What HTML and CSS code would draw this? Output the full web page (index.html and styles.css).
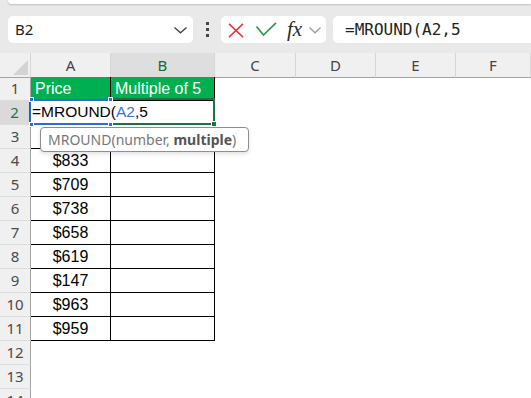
FILE: index.html
```html
<!DOCTYPE html>
<html>
<head>
<meta charset="utf-8">
<link rel="stylesheet" href="styles.css">
</head>
<body>
<div class="edge"></div>
<div class="fbar">
  <div class="namebox">
    <span class="nb-text">B2</span>
    <svg class="chev" width="13" height="7" viewBox="0 0 13 7"><polyline points="0.5,0.5 6.5,5.8 12.5,0.5" fill="none" stroke="#444" stroke-width="1.3"/></svg>
  </div>
  <div class="dots"><i></i><i></i><i></i></div>
  <div class="btns">
    <svg class="ic-x" width="16" height="15" viewBox="0 0 16 15"><path d="M1 0.8 L15 14.2 M15 0.8 L1 14.2" stroke="#e5393f" stroke-width="1.6" fill="none"/></svg>
    <svg class="ic-ok" width="21" height="15" viewBox="0 0 21 15"><polyline points="0.5,4.5 7.5,13 20,0.8" fill="none" stroke="#2e9a4a" stroke-width="1.7"/></svg>
    <span class="fx">fx</span>
    <svg class="chev2" width="12" height="7" viewBox="0 0 12 7"><polyline points="0.5,0.5 6,5.8 11.5,0.5" fill="none" stroke="#9a9a9a" stroke-width="1.2"/></svg>
  </div>
  <div class="formula">=MROUND(A2,5</div>
</div>

<div class="sheet">
  <div class="hdr">
    <div class="corner"><span class="tri"></span></div>
    <div class="ch">A</div>
    <div class="ch sel">B</div>
    <div class="ch">C</div>
    <div class="ch">D</div>
    <div class="ch">E</div>
    <div class="ch">F</div>
  </div>
  <div class="row"><div class="rh">1</div><div class="c a head">Price</div><div class="c b head">Multiple of 5</div></div>
  <div class="row"><div class="rh sel">2</div><div class="c a"></div><div class="c b"></div></div>
  <div class="row"><div class="rh">3</div><div class="c a"></div><div class="c b"></div></div>
  <div class="row"><div class="rh">4</div><div class="c a">$833</div><div class="c b"></div></div>
  <div class="row"><div class="rh">5</div><div class="c a">$709</div><div class="c b"></div></div>
  <div class="row"><div class="rh">6</div><div class="c a">$738</div><div class="c b"></div></div>
  <div class="row"><div class="rh">7</div><div class="c a">$658</div><div class="c b"></div></div>
  <div class="row"><div class="rh">8</div><div class="c a">$619</div><div class="c b"></div></div>
  <div class="row"><div class="rh">9</div><div class="c a">$147</div><div class="c b"></div></div>
  <div class="row"><div class="rh">10</div><div class="c a">$963</div><div class="c b"></div></div>
  <div class="row"><div class="rh">11</div><div class="c a">$959</div><div class="c b"></div></div>
  <div class="row plain"><div class="rh">12</div><div class="c"></div><div class="c"></div></div>
  <div class="row plain"><div class="rh">13</div><div class="c"></div><div class="c"></div></div>
  <div class="row plain"><div class="rh">14</div><div class="c"></div><div class="c"></div></div>

  <div class="range"></div>
  <div class="active"></div>
  <div class="editor">=MROUND(<span class="ref">A2</span>,5</div>
  <i class="h hb h1"></i><i class="h hb h2"></i><i class="h hb h3"></i><i class="h hb h4"></i>
  <i class="h hg"></i>
  <div class="tip">MROUND(number, <b>multiple</b>)</div>
</div>
</body>
</html>
```
FILE: styles.css
```css
html, body {
  margin: 0;
  padding: 0;
}
body {
  width: 531px;
  height: 398px;
  overflow: hidden;
  background: #e9e9e9;
  font-family: "Noto Sans", sans-serif;
}
.edge {
  height: 4px;
  margin-left: 8px;
  background: #fff;
  border-bottom-left-radius: 8px;
  box-shadow: 0 1px 2px rgba(0,0,0,0.18);
}
.fbar {
  margin-top: 12px;
  height: 27px;
  display: flex;
  align-items: stretch;
}
.namebox {
  margin-left: 8px;
  width: 185px;
  background: #fff;
  border-radius: 5px;
  display: flex;
  align-items: center;
  box-sizing: border-box;
  padding-left: 7px;
  padding-right: 6px;
}
.nb-text {
  flex: 1;
  font-size: 15px;
  color: #222;
  line-height: 27px;
}
.chev { margin-top: 1px; }
.dots {
  width: 28px;
  display: flex;
  flex-direction: column;
  align-items: center;
  justify-content: center;
  gap: 3px;
}
.dots i {
  display: block;
  width: 3px;
  height: 3px;
  background: #454545;
}
.btns {
  width: 105px;
  background: #fff;
  border-radius: 5px;
  display: flex;
  align-items: center;
  box-sizing: border-box;
  padding-left: 7px;
}
.ic-x { margin-top: 1px; }
.ic-ok { margin-left: 12px; margin-top: -1px; }
.fx {
  margin-left: 10px;
  font-family: "Liberation Serif", serif;
  font-style: italic;
  font-size: 21px;
  color: #2b2b2b;
  line-height: 27px;
  margin-top: -1px;
}
.chev2 { margin-left: 7px; margin-top: 1px; }
.formula {
  margin-left: 7px;
  flex: 1;
  margin-right: -8px;
  background: #fff;
  border-radius: 5px;
  padding-left: 12px;
  font-family: "DejaVu Sans Mono", monospace;
  font-size: 16px;
  line-height: 27px;
  color: #222;
}

.sheet {
  position: relative;
  margin-top: 10px;
  background: #fff;
}
.hdr, .row {
  display: grid;
  grid-template-columns: 31px 80px 104px 81px 80px 80px 1fr;
  height: 24px;
}
.row { grid-template-columns: 31px 80px 104px 1fr; }
.hdr > div, .row > div { box-sizing: border-box; }
.corner, .ch {
  background: #f0f0f0;
  border-bottom: 1px solid #a3a3a3;
  border-right: 1px solid #d6d6d6;
}
.corner { position: relative; }
.tri {
  position: absolute;
  right: 2px;
  bottom: 2px;
  width: 0;
  height: 0;
  border-left: 15px solid transparent;
  border-bottom: 15px solid #d3d3d3;
}
.ch {
  text-align: center;
  font-size: 15px;
  line-height: 24px;
  color: #444;
}
.ch.sel {
  background: #dedede;
  color: #0f6b3a;
}
.rh {
  background: #f0f0f0;
  border-right: 1px solid #a3a3a3;
  border-bottom: 1px solid #dcdcdc;
  text-align: center;
  font-size: 15px;
  line-height: 23px;
  color: #4a4a4a;
}
.rh.sel {
  background: #dadada;
  color: #147a43;
  border-right: 2px solid #1a7343;
}
.c {
  font-family: "Liberation Sans", Arial, sans-serif;
  font-size: 16px;
  line-height: 23px;
  color: #000;
  text-align: center;
}
.c.a, .c.b {
  border-right: 1px solid #000;
  border-bottom: 1px solid #000;
}
.c.head {
  background: #00b050;
  color: #fff;
  text-align: left;
  padding-left: 4px;
}
.c.b.head { padding-left: 4px; }
.row.plain .c { border: none; }

.range {
  position: absolute;
  left: 30px;
  top: 46px;
  width: 82px;
  height: 26px;
  box-sizing: border-box;
  border: 2px solid #2f6bd3;
}
.active {
  position: absolute;
  left: 110px;
  top: 45px;
  width: 105px;
  height: 27px;
  box-sizing: border-box;
  border: 2px solid #1a7343;
}
.editor {
  position: absolute;
  left: 31px;
  top: 48px;
  width: 181px;
  height: 22px;
  background: #fff;
  font-family: "Liberation Sans", Arial, sans-serif;
  font-size: 15.5px;
  line-height: 22px;
  color: #000;
  padding-left: 1px;
  box-sizing: border-box;
}
.ref { color: #3a74d6; }
.h {
  position: absolute;
  display: block;
  width: 5px;
  height: 5px;
  box-sizing: border-box;
}
.hb { background: #2f6bd3; border: 1px solid #fff; }
.h1 { left: 29px; top: 44px; }
.h2 { left: 108px; top: 44px; }
.h3 { left: 29px; top: 69px; }
.h4 { left: 108px; top: 69px; }
.hg {
  left: 211px;
  top: 68px;
  width: 6px;
  height: 6px;
  background: #1a7343;
  border: 1px solid #fff;
}
.tip {
  position: absolute;
  left: 40px;
  top: 74px;
  width: 209px;
  height: 25px;
  box-sizing: border-box;
  background: #fff;
  border: 1px solid #8e8e8e;
  border-radius: 4px;
  box-shadow: 0 2px 4px rgba(0,0,0,0.12);
  padding-left: 7px;
  font-size: 14px;
  line-height: 23px;
  color: #777;
  white-space: nowrap;
}
.tip b { color: #555; font-weight: 700; }
```
